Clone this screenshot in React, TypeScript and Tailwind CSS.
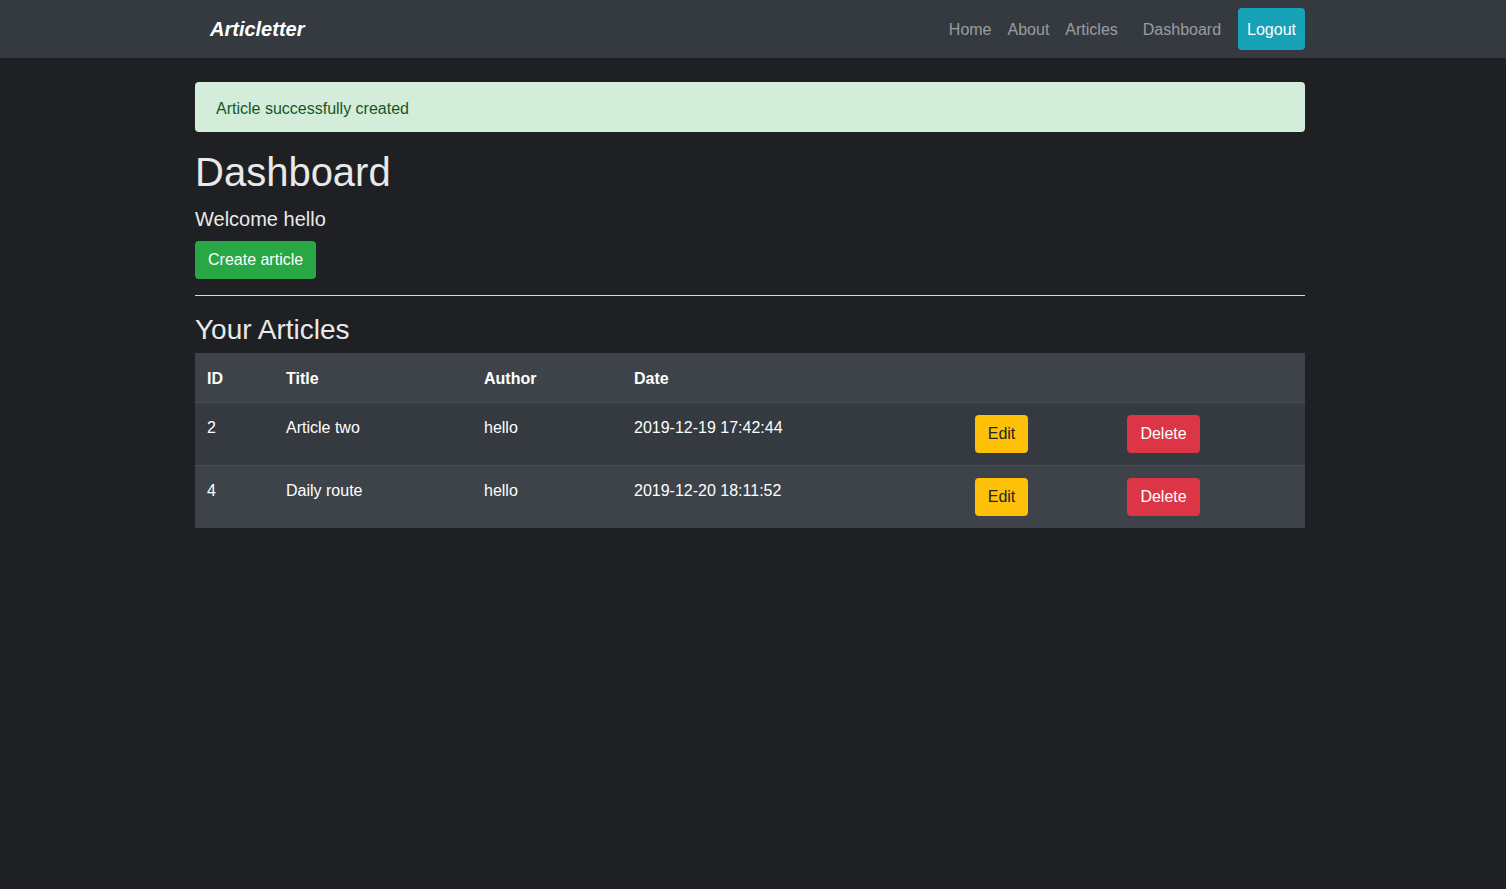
import React from 'react'

const articles = [
  { id: 2, title: 'Article two', author: 'hello', date: '2019-12-19 17:42:44' },
  { id: 4, title: 'Daily route', author: 'hello', date: '2019-12-20 18:11:52' },
]

function Navbar() {
  return (
    <nav className="h-[58px] bg-[#343a40]">
      <div className="ml-[195px] flex h-full w-[1110px] items-center justify-between">
        <a className="pl-[15px] text-[20px] font-bold italic text-white">Articletter</a>
        <div className="flex items-center pt-[2px] text-[16px] text-white/50">
          <a className="px-2">Home</a>
          <a className="px-2">About</a>
          <a className="px-2">Articles</a>
          <a className="ml-[9px] px-2">Dashboard</a>
          <button className="-mt-[2px] ml-[9px] h-[42px] rounded-[4px] bg-[#17a2b8] px-[9px] pt-[2px] text-[16px] text-white">
            Logout
          </button>
        </div>
      </div>
    </nav>
  )
}

export default function App() {
  return (
    <div
      className="min-h-[889px] bg-[#1f2023] text-[16px] text-white"
      style={{ fontFamily: '"Liberation Sans", Arial, sans-serif' }}
    >
      <Navbar />
      <main className="ml-[195px] w-[1110px] pt-6">
        <div className="mb-4 h-[50px] rounded-[4px] bg-[#d4edda] px-[21px] pt-[17px] leading-[20px] text-[#155724]">
          Article successfully created
        </div>

        <h1 className="h-[48px] text-[40px] leading-[48px] text-[#e9e9ea]">Dashboard</h1>
        <h5 className="mt-[11px] mb-[10px] text-[20px] leading-[24px] text-[#e9e9ea]">Welcome hello</h5>
        <button className="h-[38px] rounded-[4px] bg-[#28a745] px-[13px] text-[16px] text-white">
          Create article
        </button>

        <hr className="mt-4 mb-[17px] border-t border-[#d9d9d9]" />

        <h3 className="mb-[6px] h-[34px] text-[28px] leading-[34px] text-[#e9e9ea]">Your Articles</h3>

        <table className="w-full table-fixed border-separate border-spacing-0 text-left text-white">
          <colgroup>
            <col className="w-[79px]" />
            <col className="w-[198px]" />
            <col className="w-[150px]" />
            <col className="w-[341px]" />
            <col className="w-[152px]" />
            <col className="w-[190px]" />
          </colgroup>
          <thead>
            <tr className="bg-[#3e434a]">
              {['ID', 'Title', 'Author', 'Date', '', ''].map((h, i) => (
                <th key={i} className="border-b border-[#454d55] px-3 pt-[14px] pb-[11px] align-top font-bold leading-6">
                  {h}
                </th>
              ))}
            </tr>
          </thead>
          <tbody>
            {articles.map((a, i) => {
              const cell = `px-3 pt-[13px] pb-[12px] align-top leading-6 ${i === 0 ? 'border-b border-[#454d55]' : ''}`
              return (
                <tr key={a.id} className={i % 2 === 0 ? 'bg-[#343a40]' : 'bg-[#3e434a]'}>
                  <td className={cell}>{a.id}</td>
                  <td className={cell}>{a.title}</td>
                  <td className={cell}>{a.author}</td>
                  <td className={cell}>{a.date}</td>
                  <td className={cell}>
                    <button className="-mt-px block h-[38px] w-[53px] rounded-[4px] bg-[#ffc107] text-[16px] text-[#212529]">Edit</button>
                  </td>
                  <td className={cell}>
                    <button className="-mt-px block h-[38px] w-[73px] rounded-[4px] bg-[#dc3545] text-[16px] text-white">Delete</button>
                  </td>
                </tr>
              )
            })}
          </tbody>
        </table>
      </main>
    </div>
  )
}
